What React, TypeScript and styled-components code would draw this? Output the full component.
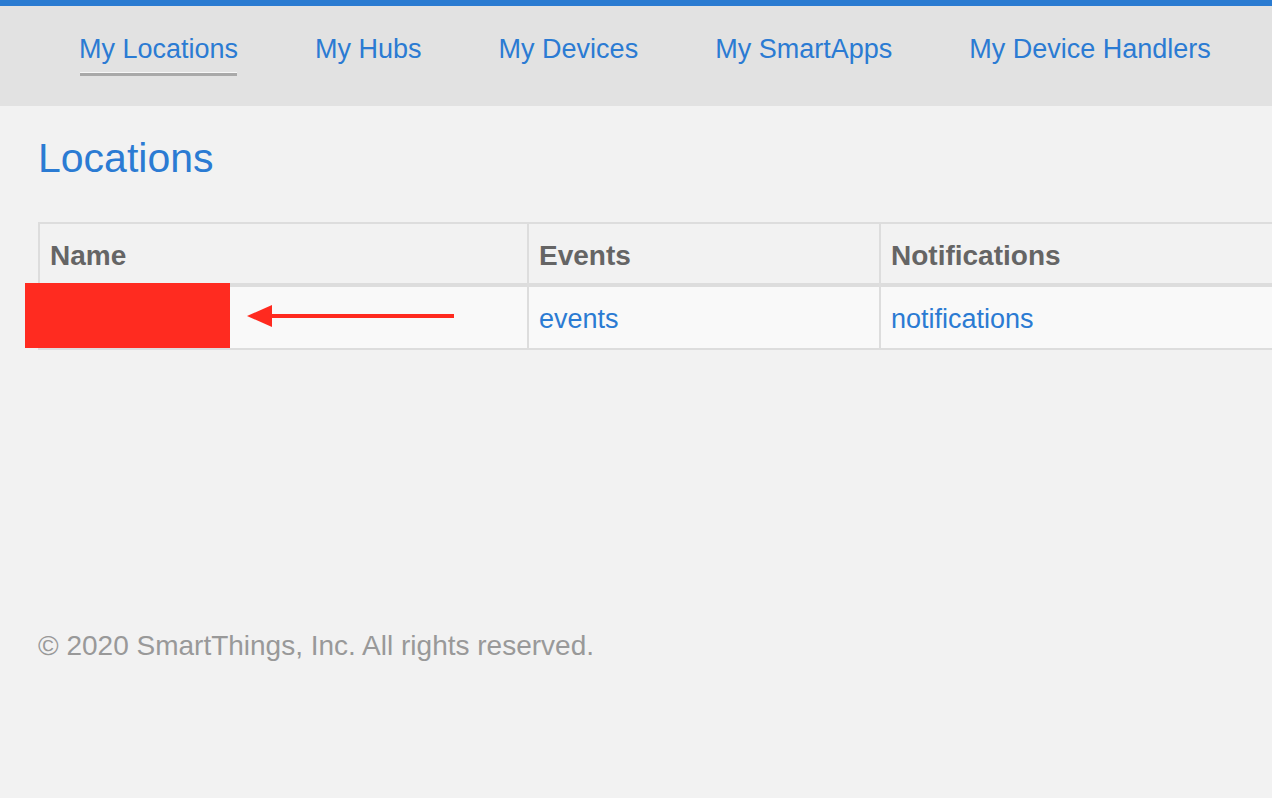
import React from "react";
import styled, { createGlobalStyle } from "styled-components";

const GlobalStyle = createGlobalStyle`
  html, body {
    margin: 0;
    padding: 0;
    background: #f2f2f2;
    overflow: hidden;
  }
  body {
    font-family: "Liberation Sans", Arial, Helvetica, sans-serif;
  }
`;

const Page = styled.div`
  min-height: 798px;
  border-top: 6px solid #2a7bd1;
  box-sizing: border-box;
`;

const NavBar = styled.nav`
  height: 100px;
  background: #e2e2e2;
  display: flex;
  align-items: flex-start;
  gap: 77px;
  padding: 28px 0 0 79px;
  box-sizing: border-box;
`;

const NavLink = styled.a<{ $active?: boolean }>`
  position: relative;
  font-size: 27px;
  line-height: 31px;
  color: #2b7bd3;
  text-decoration: none;
  white-space: nowrap;
  padding-bottom: 7px;

  &::after {
    content: "";
    display: ${(p) => (p.$active ? "block" : "none")};
    position: absolute;
    left: 1px;
    right: 1px;
    bottom: -4px;
    height: 3px;
    background: #a9a9a9;
    border-top: 1px solid #f7f7f7;
  }
`;

const Main = styled.main`
  padding: 29px 0 0 38px;
`;

const Title = styled.h1`
  margin: 0;
  font-size: 41px;
  line-height: 47px;
  font-weight: normal;
  color: #2b7bd3;
`;

const TableWrap = styled.div`
  position: relative;
  margin-top: 40px;
`;

const Table = styled.table`
  width: 100%;
  table-layout: fixed;
  border-collapse: separate;
  border-spacing: 0;
  border: 2px solid #dddddd;
  border-right: none;
`;

const HeadCell = styled.th<{ $width?: number; $last?: boolean }>`
  box-sizing: border-box;
  width: ${(p) => (p.$width ? `${p.$width}px` : "auto")};
  text-align: left;
  font-size: 28px;
  line-height: 31px;
  font-weight: bold;
  color: #656565;
  background: #f2f2f2;
  padding: 16px 10px 12px;
  border-bottom: 4px solid #dddddd;
  border-right: ${(p) => (p.$last ? "none" : "2px solid #dddddd")};
  white-space: nowrap;
`;

const Cell = styled.td<{ $last?: boolean }>`
  font-size: 27px;
  line-height: 31px;
  background: #f9f9f9;
  padding: 17px 10px 13px;
  border-right: ${(p) => (p.$last ? "none" : "2px solid #dddddd")};
  white-space: nowrap;
`;

const CellLink = styled.a`
  color: #2b7bd3;
  text-decoration: none;
`;

const Redaction = styled.div`
  position: absolute;
  left: -13px;
  top: 61px;
  width: 205px;
  height: 65px;
  background: #ff2b20;
`;

const Arrow = styled.svg`
  position: absolute;
  left: 209px;
  top: 82px;
`;

const Footer = styled.footer`
  margin-top: 280px;
  font-size: 28px;
  line-height: 31px;
  color: #999999;
`;

const navItems = [
  "My Locations",
  "My Hubs",
  "My Devices",
  "My SmartApps",
  "My Device Handlers",
];

export default function App() {
  return (
    <>
      <GlobalStyle />
      <Page>
        <NavBar>
          {navItems.map((item, i) => (
            <NavLink key={item} href="#" $active={i === 0}>
              {item}
            </NavLink>
          ))}
        </NavBar>
        <Main>
          <Title>Locations</Title>
          <TableWrap>
            <Table>
              <thead>
                <tr>
                  <HeadCell $width={489}>Name</HeadCell>
                  <HeadCell $width={352}>Events</HeadCell>
                  <HeadCell $last>Notifications</HeadCell>
                </tr>
              </thead>
              <tbody>
                <tr>
                  <Cell>&nbsp;</Cell>
                  <Cell>
                    <CellLink href="#">events</CellLink>
                  </Cell>
                  <Cell $last>
                    <CellLink href="#">notifications</CellLink>
                  </Cell>
                </tr>
              </tbody>
            </Table>
            <Redaction />
            <Arrow width="208" height="24" viewBox="0 0 208 24">
              <polygon points="0,12 25,1 25,23" fill="#ff2a1f" />
              <rect x="22" y="10" width="185" height="4" fill="#ff2a1f" />
            </Arrow>
          </TableWrap>
          <Footer>© 2020 SmartThings, Inc. All rights reserved.</Footer>
        </Main>
      </Page>
    </>
  );
}
